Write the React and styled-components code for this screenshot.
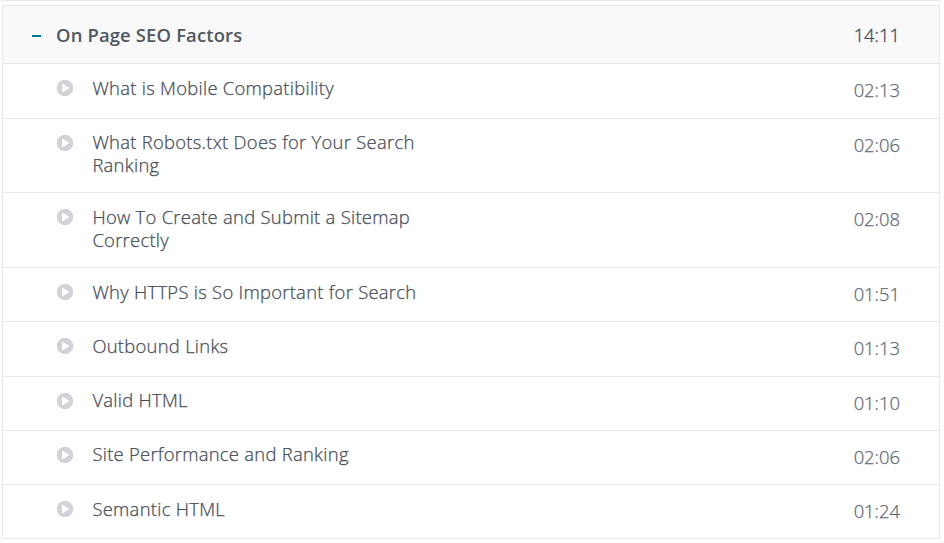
import React from "react";
import styled, { createGlobalStyle } from "styled-components";

const GlobalStyle = createGlobalStyle`
  * { box-sizing: border-box; }
  body { margin: 0; background: #fff; font-family: "Open Sans", sans-serif; overflow: hidden; }
`;

const Page = styled.main`
  width: 944px;
  height: 543px;
  padding: 0 4px 0 2px;
`;

const PreviousSection = styled.div`
  height: 6px;
  border-top: 1px solid #e8e8e8;
`;

const Section = styled.section`
  border: 1px solid #e8e8e8;
  margin-top: -1px;
`;

const Header = styled.header`
  display: flex;
  align-items: center;
  height: 57px;
  padding: 0 39px 0 29px;
  background: #f9f9f9;
  color: #505763;
  font-size: 18px;
  line-height: 24px;
`;

const Collapse = styled.span`
  width: 9px;
  height: 2px;
  margin: 2px 15px 0 0;
  background: #007791;
`;

const Title = styled.h2`
  flex: 1;
  margin: 0;
  font-size: 18.4px;
  font-weight: 600;
  letter-spacing: 0.17px;
`;

const Lectures = styled.ul`
  margin: 0;
  padding: 0;
  list-style: none;
`;

const Lecture = styled.li`
  display: flex;
  align-items: flex-start;
  height: ${(p) => p.$height}px;
  padding: 13px 39px 0 54px;
  border-top: 1px solid #e8e8e8;
  font-size: 18px;
  line-height: 23px;
`;

const PlayIcon = styled.svg`
  flex: none;
  width: 16px;
  height: 16px;
  margin: 3px 19px 0 0;
`;

const Name = styled.span`
  width: 330px;
  margin-top: ${(p) => (p.$raised ? -2 : -1)}px;
  padding-left: 0.4px;
  color: #464d59;
  font-size: 18.4px;
  font-weight: 300;
  letter-spacing: 0.28px;
  -webkit-text-stroke: 0.25px #464d59;
`;

const Time = styled.time`
  margin: ${(p) => (p.$header ? 0 : 1)}px 0 0 auto;
  color: ${(p) => (p.$header ? "#464d59" : "#606874")};
  font-size: 18.4px;
  font-weight: 300;
  -webkit-text-stroke: ${(p) => (p.$header ? "0.35px #464d59" : "0.25px #606874")};
`;

const lectures = [
  ["What is Mobile Compatibility", "02:13", 55],
  ["What Robots.txt Does for Your Search Ranking", "02:06", 74, true],
  ["How To Create and Submit a Sitemap Correctly", "02:08", 75],
  ["Why HTTPS is So Important for Search", "01:51", 54],
  ["Outbound Links", "01:13", 55],
  ["Valid HTML", "01:10", 54, true],
  ["Site Performance and Ranking", "02:06", 54, true],
  ["Semantic HTML", "01:24", 54],
];

export default function App() {
  return (
    <Page>
      <GlobalStyle />
      <PreviousSection />
      <Section>
        <Header>
          <Collapse />
          <Title>On Page SEO Factors</Title>
          <Time $header>14:11</Time>
        </Header>
        <Lectures>
          {lectures.map(([name, time, height, raised]) => (
            <Lecture key={name} $height={height}>
              <PlayIcon viewBox="0 0 16 16">
                <circle cx="8" cy="8" r="8.2" fill="#d1d3d8" />
                <path d="M5.1 3.6v8.8L12.6 8Z" fill="#fff" />
              </PlayIcon>
              <Name $raised={raised}>{name}</Name>
              <Time>{time}</Time>
            </Lecture>
          ))}
        </Lectures>
      </Section>
    </Page>
  );
}
